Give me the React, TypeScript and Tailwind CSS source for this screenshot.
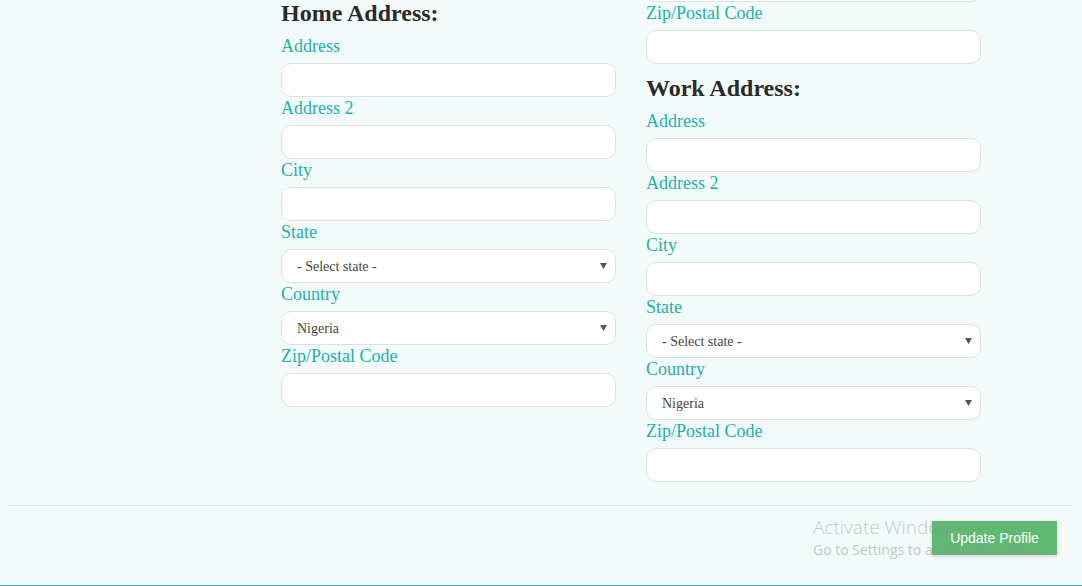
import React from "react";

const labelCls = "block text-[18px] leading-[22px] mb-[6px] text-[#20b2aa]";
const inputCls = "block w-full h-[34px] rounded-[10px] border border-[#dde1e2] bg-white";

function Field({ label }: { label: string }) {
  return (
    <div>
      <label className={labelCls}>{label}</label>
      <input className={inputCls} type="text" />
    </div>
  );
}

function SelectField({ label, value }: { label: string; value: string }) {
  return (
    <div>
      <label className={labelCls}>{label}</label>
      <div className="relative">
        <select
          className="block w-full h-[34px] rounded-[10px] border border-[#dde1e2] bg-white pl-[15px] text-[14px] text-[#444] appearance-none outline-none"
          style={{ fontFamily: '"Liberation Serif", serif' }}
          defaultValue={value}
        >
          <option>{value}</option>
        </select>
        <svg className="absolute right-[9px] top-[14px] pointer-events-none" width="7" height="6" viewBox="0 0 7 6">
          <path d="M0 0 H7 L3.5 6 Z" fill="#555" />
        </svg>
      </div>
    </div>
  );
}

function Heading({ children, className = "" }: { children: React.ReactNode; className?: string }) {
  return <h3 className={"text-[24px] font-bold leading-[26px] text-[#2b2b2b] " + className}>{children}</h3>;
}

export default function App() {
  return (
    <div
      className="relative w-[1082px] h-[586px] overflow-hidden bg-[#f3fbfa] border-b border-[#3aa89a]"
      style={{ fontFamily: '"Liberation Serif", "Times New Roman", serif' }}
    >
      <div className="flex pl-[281px] gap-[30px]">
        <div className="w-[335px] flex flex-col">
          <Heading className="mb-[9px]">Home Address:</Heading>
          <Field label="Address" />
          <Field label="Address 2" />
          <Field label="City" />
          <SelectField label="State" value="- Select state -" />
          <SelectField label="Country" value="Nigeria" />
          <Field label="Zip/Postal Code" />
        </div>
        <div className="w-[335px] flex flex-col">
          <input className={inputCls + " mt-[-32px]"} type="text" />
          <Field label="Zip/Postal Code" />
          <Heading className="mt-[11px] mb-[9px]">Work Address:</Heading>
          <Field label="Address" />
          <Field label="Address 2" />
          <Field label="City" />
          <SelectField label="State" value="- Select state -" />
          <SelectField label="Country" value="Nigeria" />
          <Field label="Zip/Postal Code" />
        </div>
      </div>
      <div className="mx-[7px] mt-[23px] w-[1065px] border-t border-[#e3e6e6] flex justify-end pt-[15px] pr-[15px]">
        <button
          className="w-[125px] h-[34px] bg-[#60b972] text-white text-[14px] shadow-[0_1px_3px_rgba(0,0,0,0.2)]"
          style={{ fontFamily: '"Liberation Sans", Arial, sans-serif' }}
        >
          Update Profile
        </button>
      </div>
      <div
        className="absolute z-10 left-[813px] top-[514px] pointer-events-none text-[rgba(150,150,150,0.55)]"
        style={{ fontFamily: '"Open Sans", "Noto Sans", sans-serif' }}
      >
        <div className="text-[19px] leading-[26px] font-light">Activate Windows</div>
        <div className="text-[14px] leading-[20px]">Go to Settings to activate Windows.</div>
      </div>
    </div>
  );
}
